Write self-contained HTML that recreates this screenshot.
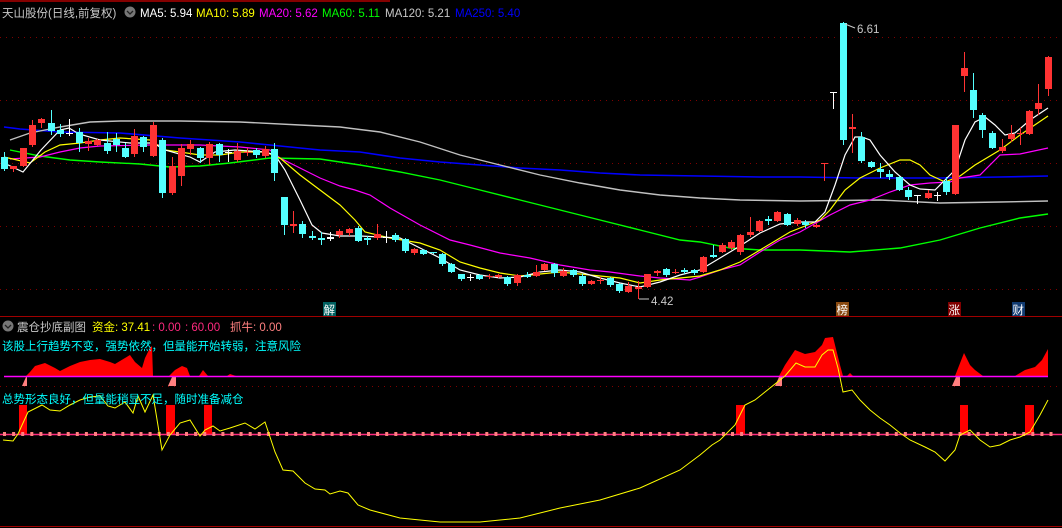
<!DOCTYPE html>
<html><head><meta charset="utf-8">
<style>
html,body{margin:0;padding:0;background:#000;width:1062px;height:528px;overflow:hidden}
svg{display:block}
.t{font-family:"Liberation Sans","Noto Sans CJK SC",sans-serif;font-size:11.5px}
</style></head><body>
<svg id="s" width="1062" height="528" xmlns="http://www.w3.org/2000/svg">
<rect width="1062" height="528" fill="#000"/>
<line x1="0" y1="1" x2="390" y2="1" stroke="#b00000" stroke-width="1.5"/>
<g id="grid" stroke="#800000" stroke-dasharray="1,5">
<line x1="0" y1="37.5" x2="1062" y2="37.5"/><line x1="0" y1="100.5" x2="1062" y2="100.5"/>
<line x1="0" y1="163.5" x2="1062" y2="163.5"/><line x1="0" y1="226.5" x2="1062" y2="226.5"/>
<line x1="0" y1="289.5" x2="1062" y2="289.5"/><line x1="0" y1="386.5" x2="1062" y2="386.5"/>
</g>
<line x1="0" y1="316.5" x2="1062" y2="316.5" stroke="#a00000"/>
<line x1="0" y1="526.5" x2="1062" y2="526.5" stroke="#a00000"/>
<g id="ma" fill="none" stroke-width="1.2"></g>
<g id="cd"></g>
<g id="low"></g>
<!-- header -->
<circle cx="130" cy="12" r="5.5" fill="#777"/><path d="M127 11 l3 3 l3 -3" stroke="#222" stroke-width="1.3" fill="none"/>
<text class="t" x="2" y="17" fill="#c8c8c8" font-size="12">天山股份(日线,前复权)</text>
<text class="t" x="140" y="17" fill="#fff">MA5: 5.94</text>
<text class="t" x="196" y="17" fill="#ff0">MA10: 5.89</text>
<text class="t" x="259" y="17" fill="#f0f">MA20: 5.62</text>
<text class="t" x="322" y="17" fill="#0f0">MA60: 5.11</text>
<text class="t" x="385" y="17" fill="#c8c8c8">MA120: 5.21</text>
<text class="t" x="455" y="17" fill="#00f">MA250: 5.40</text>
<text class="t" x="857" y="33" fill="#c8c8c8" font-size="12.5">6.61</text>
<path d="M845 24 l10 4" stroke="#c8c8c8"/>
<text class="t" x="651" y="305" fill="#c8c8c8" font-size="12.5">4.42</text>
<path d="M639 299 h10" stroke="#c8c8c8"/>
<!-- signals -->
<rect x="323" y="302" width="13" height="14" fill="#006060"/><text class="t" x="323.5" y="314" fill="#fff" font-size="12">解</text>
<rect x="836" y="302" width="13" height="14" fill="#8a4a10"/><text class="t" x="836.5" y="314" fill="#fff" font-size="12">榜</text>
<rect x="948" y="302" width="13" height="14" fill="#800000"/><text class="t" x="948.5" y="314" fill="#fff" font-size="12">涨</text>
<rect x="1012" y="302" width="13" height="14" fill="#103a70"/><text class="t" x="1012.5" y="314" fill="#fff" font-size="12">财</text>
<!-- lower header -->
<circle cx="8" cy="326" r="5.5" fill="#777"/><path d="M5 325 l3 3 l3 -3" stroke="#222" stroke-width="1.3" fill="none"/>
<text class="t" x="17" y="331" fill="#c8c8c8">震仓抄底副图</text>
<text class="t" x="92" y="331" fill="#ff0">资金: 37.41</text>
<text class="t" x="152" y="331" fill="#ff2a7f">: 0.00</text>
<text class="t" x="185" y="331" fill="#ff2a7f">: 60.00</text>
<text class="t" x="230" y="331" fill="#ff8080">抓牛: 0.00</text>
<text class="t" x="2" y="350" fill="#0ff" font-size="11.6">该股上行趋势不变，强势依然，但量能开始转弱，注意风险</text>
</svg>
<script>
var NS="http://www.w3.org/2000/svg";
function el(p,n,a){var e=document.createElementNS(NS,n);for(var k in a)e.setAttribute(k,a[k]);p.appendChild(e);return e;}
function pl(p,pts,c,w){el(p,"polyline",{points:pts.map(function(q){return q.join(",")}).join(" "),stroke:c,fill:"none","stroke-width":w||1.2});}
var ma=document.getElementById("ma");
pl(ma,[[4,127],[20,129],[60,132],[120,133],[180,138],[240,142],[280,146],[320,150],[360,152],[400,158],[440,162],[480,165],[520,168],[560,170],[600,173],[640,175],[700,176],[760,177],[800,177],[860,178],[940,178],[1000,177],[1048,176]],"#0000ff",1.6);
pl(ma,[[10,140],[30,133],[60,127],[90,122],[120,121],[180,121],[240,122],[300,125],[340,127],[380,132],[420,142],[460,155],[500,165],[540,175],[580,183],[620,190],[660,195],[700,198],[740,200],[800,201],[880,200],[940,203],[1000,202],[1048,201]],"#c0c0c0",1.4);
pl(ma,[[10,150],[40,156],[70,160],[100,162],[140,164],[170,167],[200,166],[230,163],[270,158],[320,159],[360,165],[400,172],[440,180],[480,190],[520,200],[560,210],[600,220],[640,230],[680,240],[700,242],[730,248],[760,250],[800,250],[850,252],[900,248],[940,240],[980,228],[1020,218],[1048,214]],"#00ff00",1.4);
pl(ma,[[10,159],[40,157],[60,152],[80,148],[100,146],[150,145],[200,145],[240,147],[270,150],[280,158],[300,168],[320,178],[340,186],[355,190],[370,195],[390,208],[420,225],[450,240],[470,245],[500,253],[530,258],[560,265],[590,270],[610,272],[640,276],[660,278],[690,280],[700,277],[720,270],[740,265],[760,252],[780,240],[800,232],[830,215],[850,205],[870,200],[890,192],[910,185],[930,183],[950,182],[960,178],[980,175],[1000,155],[1020,154],[1048,148]],"#ff00ff");
pl(ma,[[4,157],[30,163],[45,152],[60,145],[80,143],[100,140],[120,138],[150,140],[165,150],[180,152],[200,155],[220,155],[240,152],[265,152],[280,158],[300,175],[320,190],[340,205],[355,220],[365,232],[390,238],[420,243],[440,250],[460,262],[480,268],[500,273],[520,276],[540,274],[560,272],[580,274],[600,276],[620,278],[640,283],[660,280],[680,278],[700,276],[720,270],[740,262],[760,250],[790,232],[820,220],[830,210],[845,190],[860,178],[880,168],[900,160],[910,160],[920,165],[930,175],[945,182],[960,176],[975,165],[1000,150],[1020,135],[1048,116]],"#ffff00");
pl(ma,[[4,163],[23,172],[41,150],[60,130],[69,128],[79,134],[100,140],[130,143],[153,143],[165,150],[190,157],[200,162],[215,152],[235,150],[265,152],[275,155],[285,170],[300,200],[312,225],[322,233],[340,236],[360,236],[380,237],[400,238],[420,248],[440,258],[460,270],[480,275],[500,278],[520,277],[540,272],[560,270],[580,272],[600,278],[620,283],[640,287],[660,282],[680,275],[700,270],[720,258],[740,246],[760,233],[780,224],[800,222],[815,222],[825,212],[835,185],[845,155],[855,137],[862,137],[870,140],[880,155],[895,172],[910,185],[920,189],[935,190],[945,180],[955,170],[965,140],[975,122],[985,117],[995,125],[1005,135],[1015,133],[1030,120],[1048,108]],"#ffffff");
var C=[[4,157,169,152,171,"c"],[13,166,169,166,172,"r"],[23,148,166,148,167,"r"],[32,125,145,120,147,"r"],[41,119,123,118,128,"r"],[51,123,131,110,135,"c"],[60,130,134,124,137,"c"],[69,133,134,119,136,"w"],[79,132,143,128,152,"c"],[88,141,144,138,151,"r"],[97,140,145,139,146,"r"],[107,143,151,132,154,"c"],[116,139,145,133,152,"c"],[125,148,157,143,158,"c"],[134,136,154,129,157,"r"],[143,137,147,136,152,"c"],[153,125,156,122,157,"r"],[162,140,193,138,198,"c"],[172,166,193,157,195,"r"],[181,148,176,144,186,"r"],[190,144,149,140,155,"r"],[200,148,158,147,163,"c"],[209,144,158,142,165,"r"],[219,144,155,143,162,"c"],[228,152,153,149,162,"w"],[237,151,160,143,162,"r"],[247,152,153,148,156,"r"],[256,150,155,148,158,"c"],[265,149,156,146,158,"r"],[274,149,173,143,181,"c"],
[284,197,225,197,235,"c"],[293,224,226,211,233,"r"],[302,224,234,221,238,"c"],[312,236,238,231,240,"c"],[321,238,240,232,245,"c"],[330,237,239,232,241,"w"],[339,231,235,229,238,"r"],[349,229,233,228,236,"r"],[358,228,241,226,242,"c"],[367,238,240,236,245,"c"],[377,234,238,224,240,"r"],[386,237,238,231,243,"w"],[395,235,240,233,242,"c"],[405,239,251,238,253,"c"],[414,249,253,248,255,"r"],[423,250,254,249,255,"c"],[433,252,253,252,254,"c"],[442,254,264,253,266,"c"],[451,264,272,263,273,"c"],[461,274,279,274,281,"c"],[470,277,278,274,281,"w"],[479,275,279,274,280,"c"],[489,276,277,274,279,"r"],[498,275,277,274,278,"r"],[507,277,284,276,286,"c"],[517,275,283,274,286,"r"],[527,275,277,272,278,"c"],[536,272,276,265,277,"r"],[544,264,270,263,271,"r"],[554,264,273,263,277,"c"],[563,271,276,268,277,"r"],[573,270,275,269,277,"c"],[582,276,284,274,286,"c"],[591,281,284,280,285,"r"],[600,280,281,277,284,"r"],[610,278,285,277,287,"c"],[619,284,291,283,293,"c"],[628,286,292,282,293,"r"],[638,287,289,281,299,"r"],[647,274,287,274,288,"r"],[657,271,273,270,276,"r"],[666,269,275,268,277,"c"],[675,272,273,269,274,"r"],[684,270,272,268,274,"c"],[694,270,273,269,275,"c"],[703,257,272,256,273,"r"],[713,255,257,245,258,"c"],[722,245,252,243,253,"r"],[731,242,248,240,250,"r"],
[740,235,252,234,255,"r"],[750,232,235,217,237,"r"],[759,221,231,220,232,"r"],[768,219,221,216,225,"c"],[777,212,221,211,222,"r"],[787,214,225,213,226,"c"],[797,220,224,218,226,"r"],[805,222,225,220,228,"c"],[816,225,227,223,228,"r"],[824,163,164,163,181,"r"],[833,92,93,92,109,"w"],[843,23,140,22,145,"c"],[852,127,129,114,153,"r"],[861,137,161,132,163,"c"],[871,162,167,161,168,"c"],[880,169,172,163,178,"c"],[889,174,177,170,180,"c"],[899,177,190,176,191,"c"],[908,190,197,187,200,"c"],[917,195,196,195,204,"w"],[928,193,198,190,199,"r"],[937,195,196,192,201,"w"],[946,181,192,177,195,"c"],[955,125,194,125,195,"r"],[964,68,76,52,92,"r"],[973,90,110,73,118,"c"],[982,115,130,113,138,"c"],[992,133,148,131,149,"c"],[1002,147,151,139,153,"r"],[1011,134,139,125,142,"r"],[1020,133,134,127,145,"r"],[1029,111,134,110,135,"r"],[1038,103,109,84,115,"r"],[1048,57,89,56,96,"r"]];
var cd=document.getElementById("cd");
C.forEach(function(k){var col=k[5]=="r"?"#ff3333":k[5]=="c"?"#54ffff":"#ffffff";
el(cd,"line",{x1:k[0]+.5,y1:k[3],x2:k[0]+.5,y2:k[4],stroke:col});
var h=Math.max(1,k[2]-k[1]);el(cd,"rect",{x:k[0]-3,y:k[1],width:7,height:h,fill:col});});
var low=document.getElementById("low");
function pg(pts,c){el(low,"polygon",{points:pts.map(function(q){return q.join(",")}).join(" "),fill:c});}
pg([[26,376],[30,372],[35,366],[45,363],[55,368],[60,371],[70,366],[80,362],[90,360],[100,359],[110,362],[115,364],[125,358],[130,355],[135,362],[142,368],[145,358],[150,348],[152,346],[153,376]],"#ff0000");
pg([[169,376],[175,370],[182,366],[187,368],[190,376]],"#ff0000");
pg([[199,376],[203,370],[208,376]],"#ff0000");
pg([[227,376],[230,374],[236,376]],"#ff0000");
pg([[779,376],[785,365],[795,350],[805,354],[815,352],[822,345],[825,338],[833,337],[835,345],[840,365],[843,376]],"#ff0000");
pg([[847,376],[850,373],[853,376]],"#ff0000");
pg([[955,376],[964,353],[970,365],[975,370],[983,376]],"#ff0000");
pg([[1015,376],[1025,370],[1035,367],[1042,360],[1048,349],[1048,376]],"#ff0000");
[[22,27],[168,176],[775,782],[952,960]].forEach(function(a){pg([[a[0],386],[a[0]+4,377],[a[1],377],[a[1],386]],"#ff8080");});
el(low,"line",{x1:4,y1:376.5,x2:1048,y2:376.5,stroke:"#ff00ff","stroke-width":1.5});
[[19,27],[166,175],[204,212],[736,745],[960,968],[1025,1034]].forEach(function(a){el(low,"rect",{x:a[0],y:405,width:a[1]-a[0],height:29,fill:"#ff0000"});});
el(low,"line",{x1:0,y1:434.5,x2:1062,y2:434.5,stroke:"#ff2a7f","stroke-width":1.5});
for(var x=3;x<1050;x+=9.1)el(low,"rect",{x:x,y:432,width:3,height:4,fill:"#ff8080"});
pl(low,[[3,440],[13,441],[18,434],[28,412],[42,405],[50,410],[60,411],[70,405],[80,400],[90,397],[100,396],[108,406],[115,408],[125,402],[133,413],[138,396],[145,412],[153,395],[162,450],[170,435],[180,423],[190,420],[200,436],[205,430],[213,426],[220,431],[230,428],[245,423],[255,429],[265,422],[275,452],[283,470],[293,471],[305,483],[315,489],[325,490],[330,494],[340,491],[348,493],[358,505],[370,510],[400,518],[440,522],[480,522],[520,518],[560,508],[600,500],[640,488],[680,470],[700,455],[712,445],[720,440],[735,425],[745,405],[755,400],[770,388],[785,376],[796,363],[805,367],[815,367],[822,355],[828,350],[833,350],[838,368],[843,392],[852,390],[860,400],[870,410],[880,418],[890,425],[900,433],[910,440],[925,447],[935,452],[945,461],[955,450],[960,435],[970,430],[980,440],[990,447],[1000,445],[1010,440],[1020,437],[1030,432],[1040,415],[1048,400]],"#ffff00",1);
var t=el(low,"text",{x:2,y:403,fill:"#0ff","class":"t","font-size":"12"});t.textContent="总势形态良好，但量能稍显不足，随时准备减仓";
</script>
</body></html>
